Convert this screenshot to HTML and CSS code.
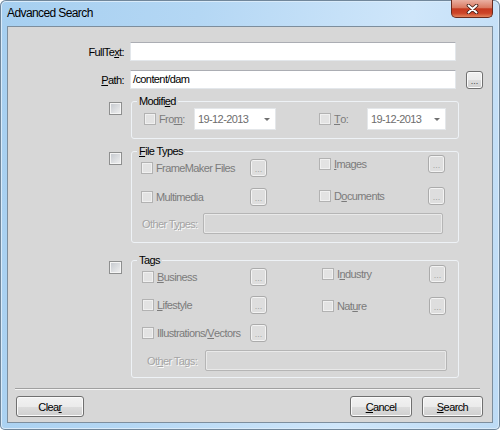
FILE: index.html
```html
<!DOCTYPE html>
<html lang="en">
<head>
<meta charset="UTF-8">
<meta name="viewport" content="width=device-width, initial-scale=1.0">
<title>Advanced Search</title>
<link rel="stylesheet" href="styles.css">
</head>
<body>
<div class="window">
    <div class="titlebar">
        <div class="title">Advanced Search</div>
        <div class="close">
            <svg width="13" height="10" viewBox="0 0 13 10">
                <path d="M2.5 1.5 L10.5 8.5 M10.5 1.5 L2.5 8.5" stroke="#3a1710" stroke-width="3.6" stroke-linecap="round"/>
                <path d="M2.5 1.5 L10.5 8.5 M10.5 1.5 L2.5 8.5" stroke="#fff" stroke-width="2" stroke-linecap="round"/>
            </svg>
        </div>
    </div>

    <div class="client">
        <div class="field">
            <div class="label">FullTe<u>x</u>t:</div>
            <div class="input"></div>
        </div>
        <div class="field path">
            <div class="label"><u>P</u>ath:</div>
            <div class="input">/content/dam</div>
            <div class="dots">...</div>
        </div>

        <div class="section modified">
            <span class="chk"></span>
            <fieldset>
                <legend>Modifi<u>e</u>d</legend>
                <div class="dates">
                    <div class="opt from"><span class="chk off"></span>Fro<u>m</u>:</div>
                    <div class="date d1">19-12-2013<span class="arrow"></span></div>
                    <div class="opt to"><span class="chk off"></span><u>T</u>o:</div>
                    <div class="date d2">19-12-2013<span class="arrow"></span></div>
                </div>
            </fieldset>
        </div>

        <div class="section types">
            <span class="chk"></span>
            <fieldset>
                <legend><u>F</u>ile Types</legend>
                <div class="inner">
                    <div class="cols">
                        <div class="col left">
                            <div class="item"><span class="opt"><span class="chk off"></span>FrameMaker Files</span><span class="dots off">...</span></div>
                            <div class="item"><span class="opt"><span class="chk off"></span>Multimedia</span><span class="dots off">...</span></div>
                        </div>
                        <div class="col right">
                            <div class="item"><span class="opt"><span class="chk off"></span><u>I</u>mages</span><span class="dots off">...</span></div>
                            <div class="item"><span class="opt"><span class="chk off"></span>D<u>o</u>cuments</span><span class="dots off">...</span></div>
                        </div>
                    </div>
                    <div class="other">
                        <span class="olabel">Other T<u>y</u>pes:</span>
                        <div class="box"></div>
                    </div>
                </div>
            </fieldset>
        </div>

        <div class="section tags">
            <span class="chk"></span>
            <fieldset>
                <legend>Tags</legend>
                <div class="inner">
                    <div class="cols">
                        <div class="col left">
                            <div class="item"><span class="opt"><span class="chk off"></span><u>B</u>usiness</span><span class="dots off">...</span></div>
                            <div class="item"><span class="opt"><span class="chk off"></span><u>L</u>ifestyle</span><span class="dots off">...</span></div>
                            <div class="item"><span class="opt"><span class="chk off"></span>Illustrations/<u>V</u>ectors</span><span class="dots off">...</span></div>
                        </div>
                        <div class="col right">
                            <div class="item"><span class="opt"><span class="chk off"></span>I<u>n</u>dustry</span><span class="dots off">...</span></div>
                            <div class="item"><span class="opt"><span class="chk off"></span>Nat<u>u</u>re</span><span class="dots off">...</span></div>
                        </div>
                    </div>
                    <div class="other">
                        <span class="olabel">Ot<u>h</u>er Tags:</span>
                        <div class="box"></div>
                    </div>
                </div>
            </fieldset>
        </div>

        <div class="sep"></div>

        <div class="footer">
            <button class="btn clear">Clea<u>r</u></button>
            <button class="btn cancel"><u>C</u>ancel</button>
            <button class="btn search"><u>S</u>earch</button>
        </div>
    </div>
</div>
</body>
</html>
```

FILE: styles.css
```css
body {
margin: 0;
font-family: "Liberation Sans", Arial, sans-serif;
font-size: 11px;
letter-spacing: -0.6px;
color: #000;
}

u {
text-decoration: underline;
text-underline-offset: 1px;
}

.window {
width: 500px;
height: 430px;
box-sizing: border-box;
border-radius: 6px 6px 5px 5px;
overflow: hidden;
background: linear-gradient(100deg, #a6cff0 0%, #b4d7f4 35%, #cfe6fa 72%, #bddbf5 100%);
box-shadow: inset 0 0 0 1px #71879b, inset 0 0 0 2px #d9ebfa;
}

.titlebar {
height: 26px;
display: flex;
align-items: center;
padding-left: 7px;
}

.title {
font-size: 12px;
}

.close {
align-self: flex-start;
margin-left: auto;
margin-right: 7px;
width: 42px;
height: 18px;
box-sizing: border-box;
border: 1px solid #6a2a1d;
border-top: none;
border-radius: 0 0 5px 5px;
background: linear-gradient(#eab0a2 0%, #da7a62 45%, #c6391f 52%, #cd4528 78%, #e3845c 100%);
display: flex;
align-items: center;
justify-content: center;
}

.client {
margin: 0 7px;
height: 397px;
box-sizing: border-box;
border: 1px solid #7d8e9d;
background: #d7d7d7;
padding-top: 15px;
}

.field {
display: flex;
align-items: center;
height: 19px;
}

.field.path {
margin-top: 9px;
}

.label {
width: 116px;
margin-right: 6px;
text-align: right;
}

.input {
width: 326px;
height: 19px;
box-sizing: border-box;
background: #fff;
border: 1px solid #e3e7eb;
border-top-color: #abadb3;
padding: 0 2px;
line-height: 17px;
}

.dots {
flex: none;
width: 17px;
height: 18px;
box-sizing: border-box;
border: 1px solid #707070;
border-radius: 3px;
background: linear-gradient(#f2f2f2, #ebebeb 50%, #dddddd 50%, #cfcfcf);
box-shadow: inset 0 0 0 1px #fbfbfb;
font-size: 9px;
letter-spacing: 0;
line-height: 18px;
text-align: center;
color: #444;
}

.field .dots {
margin-left: 10px;
}

.dots.off {
border-color: #ababab;
background: #dedede;
box-shadow: inset 0 0 0 1px #f3f3f3;
color: #a3a3a3;
}

.chk {
flex: none;
width: 13px;
height: 13px;
box-sizing: border-box;
border: 1px solid #8e8f8f;
background: linear-gradient(135deg, #c3c7cd, #f2f2f2);
box-shadow: inset 0 0 0 1px #f5f5f5;
}

.chk.off {
width: 12px;
height: 12px;
border-color: #b2b2b2;
background: #e3e3e3;
box-shadow: inset 0 0 0 1px #f0f0f0;
margin-right: 3px;
}

.section {
display: flex;
align-items: flex-start;
padding-left: 101px;
}

.section > .chk {
margin-top: 7px;
}

.modified {
margin-top: 6px;
}

.types {
margin-top: 6px;
}

.tags {
margin-top: 11px;
}

fieldset {
margin: 0 0 0 9px;
padding: 0;
width: 328px;
min-width: 0;
box-sizing: border-box;
border: 1px solid #eef2f6;
border-radius: 3px;
}

legend {
margin-left: 5px;
padding: 0 2px;
line-height: 12px;
}

.opt {
display: flex;
align-items: center;
color: #7b7b7b;
}

.dates {
display: flex;
align-items: center;
padding: 1px 0 8px 12px;
}

.opt.from {
width: 50px;
}

.opt.to {
width: 48px;
margin-left: 43px;
}

.date {
height: 22px;
box-sizing: border-box;
background: #fff;
border: 1px solid #e4e7ea;
display: flex;
align-items: center;
justify-content: space-between;
padding: 0 5px 0 3px;
color: #6d6d6d;
}

.date.d1 {
width: 82px;
}

.date.d2 {
width: 79px;
}

.arrow {
width: 0;
height: 0;
border-left: 3px solid transparent;
border-right: 3px solid transparent;
border-top: 3px solid #707070;
margin-top: 1px;
}

.inner {
padding: 0 0 8px 9px;
}

.tags .inner {
padding: 0 0 6px 10px;
}

.cols {
display: grid;
grid-template-columns: 126px 126px;
column-gap: 52px;
align-items: start;
}

.tags .cols {
grid-template-columns: 125px 124px;
column-gap: 55px;
}

.col {
display: flex;
flex-direction: column;
}

.types .left {
margin-top: 1px;
gap: 10px;
}

.types .right {
margin-top: -3px;
gap: 13px;
}

.tags .left {
margin-top: 1px;
gap: 9px;
}

.tags .right {
margin-top: -2px;
gap: 13px;
}

.item {
height: 19px;
display: flex;
align-items: center;
justify-content: space-between;
}

.other {
display: flex;
align-items: center;
margin-top: 7px;
}

.tags .other {
margin-top: 8px;
}

.olabel {
color: #a4a4a4;
text-shadow: 1px 1px 0 #fafafa;
}

.types .olabel {
width: 61px;
margin-left: 1px;
}

.tags .olabel {
width: 58px;
margin-left: 5px;
}

.box {
height: 21px;
box-sizing: border-box;
border: 1px solid #b5b5b5;
border-radius: 2px;
box-shadow: inset 0 0 0 1px #e9e9e9;
}

.types .box {
width: 240px;
}

.tags .box {
width: 242px;
}

.sep {
margin: 10px 12px 0 7px;
border-top: 1px solid #a0a0a0;
border-bottom: 1px solid #f4f4f4;
}

.footer {
display: flex;
margin-top: 6px;
padding: 0 9px 0 8px;
}

.btn {
height: 21px;
padding: 0;
font: inherit;
letter-spacing: inherit;
color: #000;
border: 1px solid #707070;
border-radius: 3px;
background: linear-gradient(#f2f2f2, #ebebeb 50%, #dddddd 50%, #cfcfcf);
box-shadow: inset 0 0 0 1px #fafafa;
}

.clear {
width: 68px;
}

.cancel {
width: 62px;
margin-left: auto;
}

.search {
width: 61px;
margin-left: 10px;
}
```
